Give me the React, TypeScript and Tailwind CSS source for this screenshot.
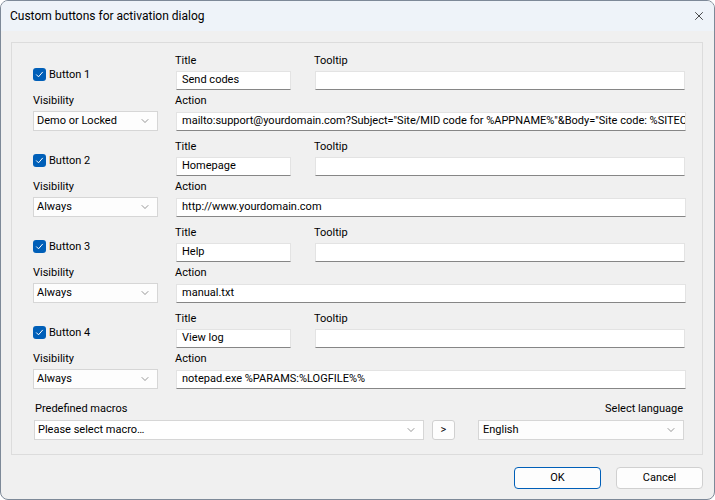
import { ChevronDown, X } from "lucide-react";

const FONT = "font-['Segoe_UI','Roboto',sans-serif]";

const BUTTONS = [
  {
    label: "Button 1",
    title: "Send codes",
    visibility: "Demo or Locked",
    action:
      'mailto:support@yourdomain.com?Subject="Site/MID code for %APPNAME%"&Body="Site code: %SITECODE%"',
  },
  { label: "Button 2", title: "Homepage", visibility: "Always", action: "http://www.yourdomain.com" },
  { label: "Button 3", title: "Help", visibility: "Always", action: "manual.txt" },
  { label: "Button 4", title: "View log", visibility: "Always", action: "notepad.exe %PARAMS:%LOGFILE%%" },
];

function Check() {
  return (
    <span className="flex h-[13px] w-[13px] items-center justify-center rounded-[3px] bg-[#005fb8]">
      <svg width="9" height="9" viewBox="0 0 9 9" fill="none">
        <path d="M1.5 4.8 L3.5 6.8 L7.5 2.2" stroke="white" strokeWidth="1" strokeLinecap="round" strokeLinejoin="round" />
      </svg>
    </span>
  );
}

function TextBox({ value, className }: { value: string; className: string }) {
  return (
    <div
      className={`flex h-[19px] items-center overflow-hidden whitespace-nowrap border border-[#e3e3e3] border-b-[#868686] bg-white pl-[5px] text-[11px] text-black ${className}`}
    >
      {value}
    </div>
  );
}

function Combo({ value, className }: { value: string; className: string }) {
  return (
    <div
      className={`flex h-[20px] items-center justify-between border border-[#d6d6d6] bg-[#fdfdfd] pl-[3px] pr-[6px] text-[11px] text-black ${className}`}
    >
      <span className="whitespace-nowrap">{value}</span>
      <ChevronDown className="h-[12px] w-[12px] text-[#5f5f5f]" strokeWidth={1.3} />
    </div>
  );
}

function ButtonBlock({ b }: { b: (typeof BUTTONS)[number] }) {
  return (
    <div className="flex h-[86px]">
      <div className="flex w-[143px] flex-col pt-[15px]">
        <div className="flex h-[13px] items-center gap-[3px]">
          <Check />
          <span className="text-[11px] leading-none">{b.label}</span>
        </div>
        <div className="mt-[12px] h-4 text-[11px] leading-4">Visibility</div>
        <Combo value={b.visibility} className="mt-[2px] w-[125px]" />
      </div>
      <div className="flex w-[510px] flex-col">
        <div className="flex">
          <div className="flex w-[139px] flex-col">
            <div className="-ml-px h-4 text-[11px] leading-4">Title</div>
            <TextBox value={b.title} className="mt-[2px] w-[115px]" />
          </div>
          <div className="flex flex-1 flex-col">
            <div className="-ml-px h-4 text-[11px] leading-4">Tooltip</div>
            <TextBox value="" className="mt-[2px] w-[370px]" />
          </div>
        </div>
        <div className="-ml-px mt-[3px] h-4 text-[11px] leading-4">Action</div>
        <TextBox value={b.action} className="mt-[3px] w-[510px]" />
      </div>
    </div>
  );
}

export default function App() {
  return (
    <div className={`h-[500px] w-[715px] ${FONT} text-black`}>
      <div className="flex h-full w-full flex-col overflow-hidden rounded-[8px] border border-[#7d8998] bg-[#f0f0f0]">
        <div className="flex h-[30px] shrink-0 items-center justify-between bg-[#eef3f9] pl-[9px] pr-[8px]">
          <span className="text-[12px]">Custom buttons for activation dialog</span>
          <X className="h-[14px] w-[14px]" strokeWidth={1.2} />
        </div>
        <div className="mx-[10px] mt-[11px] flex h-[413px] w-[692px] flex-col border border-[#dcdcdc] pl-[21px] pt-[10px]">
          {BUTTONS.map((b) => (
            <ButtonBlock key={b.label} b={b} />
          ))}
          <div className="mt-[4px] flex items-end">
            <div className="flex flex-col">
              <div className="ml-[2px] h-4 text-[11px] leading-4">Predefined macros</div>
              <Combo value="Please select macro…" className="ml-px mt-[3px] w-[390px] bg-white" />
            </div>
            <div className="ml-[8px] flex h-[20px] w-[23px] items-center justify-center rounded-[3px] border border-[#d0d0d0] bg-[#fdfdfd] text-[11px]">
              &gt;
            </div>
            <div className="ml-[23px] flex flex-col items-end">
              <div className="mr-px h-4 text-[11px] leading-4">Select language</div>
              <Combo value="English" className="mt-[3px] w-[206px] pl-[4px]" />
            </div>
          </div>
        </div>
        <div className="mr-[11px] mt-[12px] flex justify-end gap-[15px]">
          <div className="flex h-[22px] w-[87px] items-center justify-center rounded-[4px] border border-[#005fb8] bg-[#fdfdfd] text-[11px]">
            OK
          </div>
          <div className="flex h-[22px] w-[87px] items-center justify-center rounded-[4px] border border-[#d0d0d0] bg-[#fdfdfd] text-[11px]">
            Cancel
          </div>
        </div>
      </div>
    </div>
  );
}
